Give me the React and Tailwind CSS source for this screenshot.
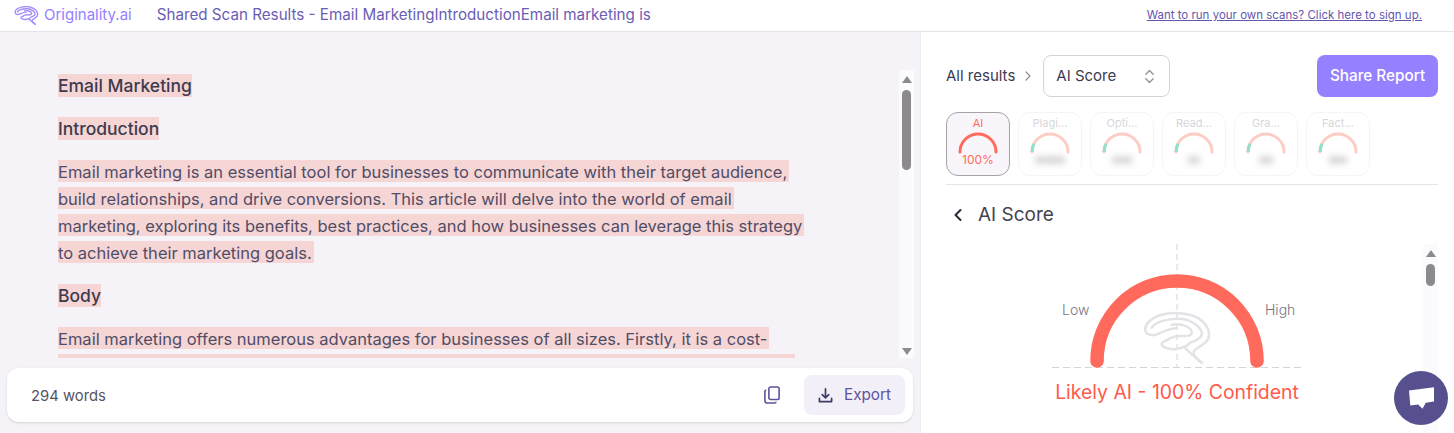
import { ChevronRight, ChevronLeft } from 'lucide-react';

const firstParagraph = [
    'Email marketing is an essential tool for businesses to communicate with their target audience,',
    'build relationships, and drive conversions. This article will delve into the world of email',
    'marketing, exploring its benefits, best practices, and how businesses can leverage this strategy',
    'to achieve their marketing goals.',
];

const secondParagraph = [
    'Email marketing offers numerous advantages for businesses of all sizes. Firstly, it is a cost-',
];

const fadedTiles = [
    { label: 'Plagi...', blur: 'w-[30px]' },
    { label: 'Opti...', blur: 'w-[20px]' },
    { label: 'Read...', blur: 'w-[12px]' },
    { label: 'Gra...', blur: 'w-[14px]' },
    { label: 'Fact...', blur: 'w-[18px]' },
];

function Brain({ className, color, width = 8 }) {
    return (
        <svg viewBox="14 10 206 162" fill="none" stroke={color} strokeWidth={width} strokeLinecap="round" strokeLinejoin="round" className={className}>
            <path d="M190 165C178 155 165 145 165 135C165 122 190 118 205 100C220 78 208 50 180 32C155 17 110 12 75 20C45 27 20 45 20 65C20 80 40 88 60 78C75 72 95 62 115 62" />
            <path d="M40 60C48 45 85 32 125 33C160 35 190 60 190 78C190 92 170 100 155 105C140 122 105 130 80 120C68 114 62 105 85 98" />
            <path d="M100 52C120 45 155 55 160 72C160 88 140 85 125 85C110 85 95 90 85 98" />
            <path d="M140 122C155 135 175 155 190 165" />
        </svg>
    );
}

function MiniGauge({ faded }) {
    return (
        <svg viewBox="0 0 42 24" className="w-[42px] h-[24px]" fill="none" strokeWidth="3" strokeLinecap="round">
            <path d="M3 22A18 18 0 0 1 39 22" stroke={faded ? '#fdccc5' : '#ff6a5c'} />
            {faded && <path d="M3 22A18 18 0 0 1 5 14" stroke="#8fe3c2" strokeLinecap="butt" />}
        </svg>
    );
}

function ScrollTrack({ thumb, showDown }) {
    return (
        <div className="w-[15px] flex-none self-stretch flex flex-col items-center bg-[#fbfafc] pt-[6px] pb-[3px]">
            <div className="w-0 h-0 border-x-[5px] border-x-transparent border-b-[7px] border-b-[#8c8a8f]" />
            <div className={`w-[9px] rounded-full bg-[#8c8a8f] mt-[7px] ${thumb}`} />
            {showDown && <div className="mt-auto w-0 h-0 border-x-[5px] border-x-transparent border-t-[7px] border-t-[#8c8a8f]" />}
        </div>
    );
}

function HighlightLines({ lines }) {
    return (
        <p className="pt-px -mb-px text-[16.500px] text-[#504d67]">
            {lines.map((line) => (
                <span key={line} className="block">
                    <span className="bg-[#f6d5d5] pt-[2px] pr-[2px]">{line}</span>
                </span>
            ))}
        </p>
    );
}

export default function App() {
    return (
        <div className="h-screen w-full overflow-hidden flex flex-col bg-white font-['Inter',sans-serif]">
            {/* Header */}
            <header className="h-[32px] flex-none flex items-center bg-white border-b border-[#e6e4ea] pl-[14px] pr-[32px]">
                <Brain className="w-[25px] h-[19px]" color="#a48cff" width={12} />
                <span className="ml-[5px] text-[15px] text-[#9580ff]">Originality.ai</span>
                <span className="ml-[25px] text-[15.200px] text-[#6a5db5]">
                    Shared Scan Results - Email MarketingIntroductionEmail marketing is
                </span>
                <a href="#" className="ml-auto text-[11.500px] text-[#6456ad] underline">
                    Want to run your own scans? Click here to sign up.
                </a>
            </header>

            <main className="flex-1 min-h-0 flex">
                {/* Document panel */}
                <section className="w-[921px] flex-none flex flex-col bg-[#f5f2f8] border-r border-[#eeecf1]">
                    <div className="flex pr-[6px] h-[326px]">
                        <div className="flex-1 overflow-hidden pl-[58px] pt-[40px] text-[17.500px] leading-[27px] flex flex-col gap-[16px]">
                            <h2 className="font-medium text-[#3d3b4f]">
                                <span className="bg-[#f6d5d5] py-px">Email Marketing</span>
                            </h2>
                            <h2 className="font-medium text-[#3d3b4f]">
                                <span className="bg-[#f6d5d5] py-px">Introduction</span>
                            </h2>
                            <HighlightLines lines={firstParagraph} />
                            <h2 className="font-medium text-[#3d3b4f]">
                                <span className="bg-[#f6d5d5] py-px">Body</span>
                            </h2>
                            <div>
                                <HighlightLines lines={secondParagraph} />
                                {/* Next line, cut off by the scroll area: only its highlight shows */}
                                <div className="mt-[2px] h-[22px] w-[737px] bg-[#f6d5d5]" />
                            </div>
                        </div>
                        <div className="flex mt-[38px]">
                            <ScrollTrack thumb="h-[80px]" showDown />
                        </div>
                    </div>

                    {/* Word count bar */}
                    <div className="ml-[7px] mr-[7px] mt-[10px] h-[54px] flex items-center bg-white rounded-xl shadow-sm pl-[24px] pr-[8px]">
                        <span className="pt-[2px] text-[14.800px] text-[#55535f]">294 words</span>
                        <button className="ml-auto mr-[24px] text-[#5d549b]">
                            <svg viewBox="0 0 18 20" className="w-[16px] h-[18px]" fill="none" stroke="currentColor" strokeWidth="1.800" strokeLinejoin="round">
                                <rect x="5.500" y="1" width="11.500" height="14" rx="2" />
                                <path d="M2.500 4.500A1.500 1.500 0 0 0 1 6V16.500A2.500 2.500 0 0 0 3.500 19H12A1.500 1.500 0 0 0 13.500 17.500" />
                            </svg>
                        </button>
                        <button className="w-[101px] h-[40px] pt-px flex items-center justify-center gap-[11px] rounded-lg bg-[#f3eff9] text-[15.300px] text-[#5d549b]">
                            <svg viewBox="0 0 16 16" className="w-[15px] h-[15px]" fill="none" stroke="#3f3a66" strokeWidth="1.800" strokeLinecap="round" strokeLinejoin="round">
                                <path d="M8 1V10M4.500 7L8 10.500L11.500 7" />
                                <path d="M1.500 11V14.500H14.500V11" />
                            </svg>
                            Export
                        </button>
                    </div>
                </section>

                {/* Results panel */}
                <section className="flex-1 min-w-0 flex flex-col pl-[25px] pr-[16px] pt-[23px]">
                    <div className="flex items-center h-[42px] flex-none">
                        <span className="pt-px text-[15px] text-[#3d3b4f]">All results</span>
                        <ChevronRight className="ml-[5px] w-[16px] h-[16px] text-[#8f8d95]" strokeWidth={1.800} />
                        <div className="ml-[7px] w-[127px] h-[42px] pt-px flex items-center justify-between rounded-lg border border-[#d5d3d9] pl-[12px] pr-[14px] text-[15px] text-[#3d3b4f]">
                            AI Score
                            <svg viewBox="0 0 12 16" className="w-[11px] h-[15px]" fill="none" stroke="#908e96" strokeWidth="1.400" strokeLinecap="round" strokeLinejoin="round">
                                <path d="M2 5.500L6 1.500L10 5.500M2 10.500L6 14.500L10 10.500" />
                            </svg>
                        </div>
                        <button className="ml-auto w-[121px] h-[42px] pt-px rounded-lg bg-[#9580ff] text-white text-[15.300px] font-medium">
                            Share Report
                        </button>
                    </div>

                    {/* Score tiles */}
                    <div className="mt-[15px] flex gap-[8px] flex-none">
                        <div className="w-[64px] h-[64px] flex flex-col items-center rounded-xl border border-[#a5a3a8] bg-[#f9f6fb] pt-[3px] text-[#ff6a5c]">
                            <span className="text-[11px] leading-[14px]">AI</span>
                            <MiniGauge />
                            <span className="text-[12px] leading-[14px] mt-[-1px]">100%</span>
                        </div>
                        {fadedTiles.map((tile) => (
                            <div key={tile.label} className="w-[64px] h-[64px] flex flex-col items-center rounded-xl border border-[#f6f4f7] pt-[3px]">
                                <span className="text-[11px] leading-[14px] text-[#d8d6da]">{tile.label}</span>
                                <MiniGauge faded />
                                <div className={`h-[8px] bg-[#d8d6da] blur-[3px] mt-[2px] ${tile.blur}`} />
                            </div>
                        ))}
                    </div>
                    <div className="mt-[8px] border-t border-[#e6e4ea] flex-none" />

                    <div className="mt-[18px] flex items-center h-[24px] flex-none">
                        <ChevronLeft className="ml-[2px] w-[20px] h-[20px] text-[#2d2b3a]" strokeWidth={2.500} />
                        <h2 className="ml-[10px] text-[19px] text-[#45434f]">AI Score</h2>
                    </div>

                    {/* Gauge area */}
                    <div className="mt-[17px] flex-1 min-h-0 flex">
                        <div className="flex-1 min-w-0 pl-[106px]">
                            <div className="relative w-[250px] h-[124px]">
                                <svg viewBox="0 0 250 124" className="w-[250px] h-[124px]" fill="none">
                                    <path d="M125 0V124" stroke="#d6d4d9" strokeDasharray="6 4" />
                                    <path d="M0 123.500H250" stroke="#d6d4d9" strokeDasharray="7 4" />
                                    <path d="M45 117A80 80 0 0 1 205 117" stroke="#ff6a5c" strokeWidth="13.500" strokeLinecap="round" />
                                </svg>
                                <Brain className="absolute left-[91px] top-[67px] w-[69px] h-[54px]" color="#e4e2e6" width={7.500} />
                                <span className="absolute left-[10px] top-[55px] text-[14px] font-light text-[#77757e]">Low</span>
                                <span className="absolute left-[213px] top-[55px] text-[14px] font-light text-[#77757e]">High</span>
                            </div>
                            <p className="w-[250px] mt-[10px] text-center text-[19.400px] whitespace-nowrap text-[#ff5a4a]">Likely AI - 100% Confident</p>
                        </div>
                        <ScrollTrack thumb="h-[22px]" />
                    </div>
                </section>
            </main>

            {/* Chat bubble */}
            <button className="fixed left-[1394px] top-[371px] w-[54px] h-[54px] rounded-full bg-[#56508f] flex items-center justify-center">
                <svg viewBox="0 0 76 65" className="w-[25px] h-[22px]" fill="#ffffff">
                    <path d="M0 10L76 0V43L51 47L41 65L28 52L4 55Z" />
                </svg>
            </button>
        </div>
    );
}
